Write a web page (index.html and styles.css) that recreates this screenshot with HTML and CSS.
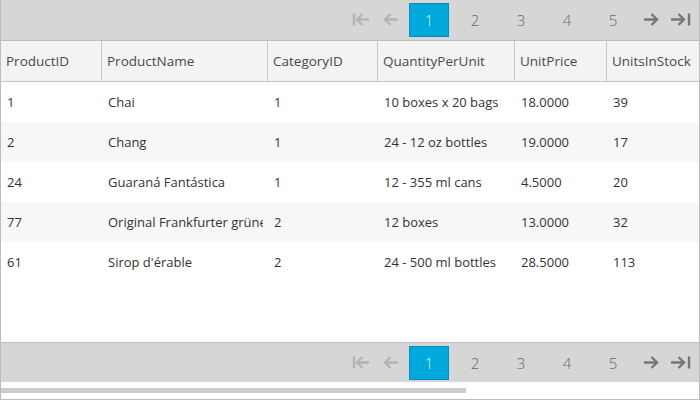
FILE: index.html
```html
<!DOCTYPE html>
<html>
<head>
<meta charset="utf-8">
<link rel="stylesheet" href="styles.css">
</head>
<body>
<div class="grid">
  <div class="pager pager-top">
    <span class="nav"><svg width="30" height="34" viewBox="0 0 30 34"><path d="M8 10.5v12" stroke="#b4b4b4" stroke-width="2.4" fill="none"/><path d="M11 16.5h12M16.5 11l-5.5 5.5 5.5 5.5" stroke="#b4b4b4" stroke-width="2.4" fill="none"/></svg></span>
    <span class="nav"><svg width="30" height="34" viewBox="0 0 30 34"><path d="M9 16.5h13M14.5 11l-5.5 5.5 5.5 5.5" stroke="#b4b4b4" stroke-width="2.4" fill="none"/></svg></span>
    <span class="page active">1</span>
    <span class="page">2</span>
    <span class="page">3</span>
    <span class="page">4</span>
    <span class="page">5</span>
    <span class="nav"><svg width="30" height="34" viewBox="0 0 30 34"><path d="M8 16.5h13M15.5 11l5.5 5.5-5.5 5.5" stroke="#777" stroke-width="2.4" fill="none"/></svg></span>
    <span class="nav"><svg width="30" height="34" viewBox="0 0 30 34"><path d="M5 16.5h12M12.5 11l5.5 5.5-5.5 5.5" stroke="#777" stroke-width="2.4" fill="none"/><path d="M23 10.5v12" stroke="#777" stroke-width="2.4" fill="none"/></svg></span>
  </div>
  <div class="table">
    <div class="row head">
      <div class="cell">ProductID</div>
      <div class="cell">ProductName</div>
      <div class="cell">CategoryID</div>
      <div class="cell">QuantityPerUnit</div>
      <div class="cell">UnitPrice</div>
      <div class="cell">UnitsInStock</div>
    </div>
    <div class="row">
      <div class="cell">1</div><div class="cell">Chai</div><div class="cell">1</div><div class="cell">10 boxes x 20 bags</div><div class="cell">18.0000</div><div class="cell">39</div>
    </div>
    <div class="row alt">
      <div class="cell">2</div><div class="cell">Chang</div><div class="cell">1</div><div class="cell">24 - 12 oz bottles</div><div class="cell">19.0000</div><div class="cell">17</div>
    </div>
    <div class="row">
      <div class="cell">24</div><div class="cell">Guaraná Fantástica</div><div class="cell">1</div><div class="cell">12 - 355 ml cans</div><div class="cell">4.5000</div><div class="cell">20</div>
    </div>
    <div class="row alt">
      <div class="cell">77</div><div class="cell">Original Frankfurter grüne Soße</div><div class="cell">2</div><div class="cell">12 boxes</div><div class="cell">13.0000</div><div class="cell">32</div>
    </div>
    <div class="row">
      <div class="cell">61</div><div class="cell">Sirop d'érable</div><div class="cell">2</div><div class="cell">24 - 500 ml bottles</div><div class="cell">28.5000</div><div class="cell">113</div>
    </div>
  </div>
  <div class="pager pager-bottom">
    <span class="nav"><svg width="30" height="34" viewBox="0 0 30 34"><path d="M8 10.5v12" stroke="#b4b4b4" stroke-width="2.4" fill="none"/><path d="M11 16.5h12M16.5 11l-5.5 5.5 5.5 5.5" stroke="#b4b4b4" stroke-width="2.4" fill="none"/></svg></span>
    <span class="nav"><svg width="30" height="34" viewBox="0 0 30 34"><path d="M9 16.5h13M14.5 11l-5.5 5.5 5.5 5.5" stroke="#b4b4b4" stroke-width="2.4" fill="none"/></svg></span>
    <span class="page active">1</span>
    <span class="page">2</span>
    <span class="page">3</span>
    <span class="page">4</span>
    <span class="page">5</span>
    <span class="nav"><svg width="30" height="34" viewBox="0 0 30 34"><path d="M8 16.5h13M15.5 11l5.5 5.5-5.5 5.5" stroke="#777" stroke-width="2.4" fill="none"/></svg></span>
    <span class="nav"><svg width="30" height="34" viewBox="0 0 30 34"><path d="M5 16.5h12M12.5 11l5.5 5.5-5.5 5.5" stroke="#777" stroke-width="2.4" fill="none"/><path d="M23 10.5v12" stroke="#777" stroke-width="2.4" fill="none"/></svg></span>
  </div>
  <div class="scroll"><div class="thumb"></div></div>
</div>
</body>
</html>
```
FILE: styles.css
```css
html, body {
  margin: 0;
  padding: 0;
  background: #fff;
}
.grid {
  width: 700px;
  height: 400px;
  box-sizing: border-box;
  border: 1px solid #bcbcbc;
  border-top: none;
  display: flex;
  flex-direction: column;
  font-family: "Open Sans", "Noto Sans", sans-serif;
  font-size: 13px;
  color: #333;
  overflow: hidden;
}
.pager {
  height: 40px;
  box-sizing: border-box;
  background: #d6d6d6;
  display: flex;
  justify-content: flex-end;
  align-items: center;
  padding-right: 3px;
  flex: none;
}
.pager-top {
  border-bottom: 1px solid #bdbdbd;
  height: 41px;
}
.pager-bottom {
  border-top: 1px solid #bdbdbd;
  height: 40px;
}
.nav {
  width: 30px;
  height: 34px;
  display: flex;
}
.page {
  width: 40px;
  height: 34px;
  box-sizing: border-box;
  margin: 0 3px;
  display: flex;
  align-items: center;
  justify-content: center;
  font-size: 15px;
  font-weight: 300;
  color: #666;
  border: 1px solid transparent;
}
.page.active {
  background: #00a9dd;
  border-color: #0b8bba;
  color: #d9f3fc;
}
.table {
  flex: 1;
  display: flex;
  flex-direction: column;
}
.row {
  display: grid;
  grid-template-columns: 101px 166px 110px 137px 92px 1fr;
  height: 40px;
  align-items: center;
}
.row.alt {
  background: #f7f7f7;
}
.row.head {
  background: #f3f3f3;
  border-bottom: 1px solid #c4c4c4;
  color: #4a4a4a;
  font-size: 13.5px;
  align-items: stretch;
}
.cell {
  padding-left: 6px;
  margin-right: 5px;
  white-space: nowrap;
  overflow: hidden;
  text-overflow: clip;
}
.head .cell {
  display: flex;
  align-items: center;
  border-right: 1px solid #c8c8c8;
  padding-left: 5px;
  margin-right: 0;
}
.head .cell:last-child {
  border-right: none;
}
.scroll {
  height: 17px;
  flex: none;
  padding-top: 6px;
  box-sizing: border-box;
}
.thumb {
  width: 465px;
  height: 5px;
  background: #cdcdcd;
}
```
